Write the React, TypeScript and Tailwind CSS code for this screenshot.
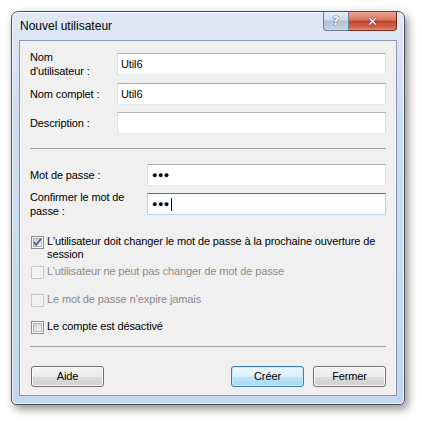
import React from "react";

// Boîte de dialogue Windows 7 : « Nouvel utilisateur »

const inputBox =
  "h-[22px] bg-white border border-t-[#abadb3] border-l-[#dbdfe6] border-r-[#dbdfe6] border-b-[#e3e9ef] flex items-center pl-[3px]";

function TextBox({ value, className = "" }: { value?: string; className?: string }) {
  return <div className={inputBox + " " + className}>{value}</div>;
}

function PasswordBox({ focused, className = "" }: { focused?: boolean; className?: string }) {
  const border = focused
    ? "border-t-[#3d7bad] border-l-[#b5cfe7] border-r-[#b5cfe7] border-b-[#b7d9ed] bg-[#fbfdff]"
    : "border-t-[#abadb3] border-l-[#dbdfe6] border-r-[#dbdfe6] border-b-[#e3e9ef] bg-white";
  return (
    <div className={`h-[22px] border flex items-center pl-[4px] ${border} ${className}`}>
      <span className="text-[9px] leading-none tracking-[0.5px] text-black">●●●</span>
      {focused && <span className="ml-[1px] h-[13px] w-px bg-black" />}
    </div>
  );
}

function Checkbox({ checked, disabled }: { checked?: boolean; disabled?: boolean }) {
  return (
    <span
      className={`mt-[1px] flex h-[13px] w-[13px] shrink-0 items-center justify-center border ${
        disabled ? "border-[#c7c7c7] bg-[#f4f4f4]" : "border-[#8e8f8f] bg-white"
      }`}
    >
      <span
        className={`flex h-[9px] w-[9px] items-center justify-center ${
          disabled
            ? "bg-[#f1f1f1]"
            : "bg-gradient-to-br from-[#cbcfd5] to-[#f6f6f6] border border-[#aeb3b9]"
        }`}
      >
        {checked && (
          <svg width="9" height="9" viewBox="0 0 9 9" className="overflow-visible">
            <path d="M0.8 4.2 L3.3 6.9 L8 0.8" fill="none" stroke="#4b5e93" strokeWidth="1.8" />
          </svg>
        )}
      </span>
    </span>
  );
}

function CheckRow({
  label,
  checked,
  disabled,
  className = "",
}: {
  label: React.ReactNode;
  checked?: boolean;
  disabled?: boolean;
  className?: string;
}) {
  return (
    <div className={`flex items-start gap-[3px] leading-[13px] ${className}`}>
      <Checkbox checked={checked} disabled={disabled} />
      <span className={disabled ? "text-[#8b8b8b]" : "text-black"}>{label}</span>
    </div>
  );
}

function Button({ children, isDefault }: { children: React.ReactNode; isDefault?: boolean }) {
  return (
    <div
      className={`flex h-[21px] w-[73px] items-center justify-center rounded-[3px] border ${
        isDefault
          ? "border-[#3c7fb1] bg-[linear-gradient(#eaf6fd_0%,#d9f0fc_50%,#bee6fd_50%,#a7d9f5_100%)] shadow-[inset_0_0_0_1px_#c8ecfd]"
          : "border-[#707070] bg-[linear-gradient(#f2f2f2_0%,#ebebeb_50%,#dddddd_50%,#cfcfcf_100%)] shadow-[inset_0_0_0_1px_#fcfcfc]"
      }`}
    >
      {children}
    </div>
  );
}

export default function App() {
  return (
    <div className="min-h-[422px] w-[422px] bg-white pl-[11px] pt-[11px] font-['Liberation_Sans',Arial,sans-serif] text-[11px] tracking-[-0.12px] text-black">
      <div className="flex h-[394px] w-[394px] flex-col rounded-t-[7px] rounded-b-[5px] border border-[#46525f] bg-[linear-gradient(#dfe9f5_0%,#cddcef_30%,#c4d7ee_100%)] shadow-[3px_4px_10px_rgba(0,0,0,0.45),inset_0_0_0_1px_rgba(255,255,255,0.7)]">
        {/* barre de titre */}
        <div className="flex h-[28px] items-start justify-between pl-[8px] pr-[7px]">
          <div className="pt-[6px] text-[12px] leading-[16px] tracking-normal text-black">
            Nouvel utilisateur
          </div>
          <div className="flex">
            <div className="flex h-[19px] w-[26px] items-center justify-center rounded-bl-[4px] border border-t-0 border-[#6f7e92] bg-[linear-gradient(#e4ecf5_0%,#cfdbe9_45%,#b2c3d8_50%,#c7d6e8_100%)]">
              <span className="font-['DejaVu_Sans',sans-serif] text-[12px] font-bold leading-none text-white [text-shadow:0_0_1px_#334,0_0_1px_#334]">
                ?
              </span>
            </div>
            <div className="flex h-[19px] w-[48px] items-center justify-center rounded-br-[4px] border border-t-0 border-l-0 border-[#7a2a1f] bg-[linear-gradient(#e9a796_0%,#d9765f_45%,#c4432b_50%,#d0644c_85%,#e3947c_100%)]">
              <span className="font-['DejaVu_Sans',sans-serif] text-[13px] font-bold leading-none text-white [text-shadow:0_0_1px_#5a1a10,0_0_1px_#5a1a10]">
                ✕
              </span>
            </div>
          </div>
        </div>

        {/* zone client */}
        <div className="mx-[7px] mb-[8px] flex flex-1 flex-col border border-[#8596ad] bg-[#f0f0f0] px-[10px] pt-[12px]">
          <div className="flex h-[22px] items-center">
            <div className="w-[87px] shrink-0 leading-[14px]">
              Nom
              <br />
              d&apos;utilisateur :
            </div>
            <TextBox value="Util6" className="flex-1" />
          </div>
          <div className="mt-[8px] flex h-[22px] items-center">
            <div className="w-[87px] shrink-0">Nom complet :</div>
            <TextBox value="Util6" className="flex-1" />
          </div>
          <div className="mt-[7px] flex h-[22px] items-center">
            <div className="w-[87px] shrink-0">Description :</div>
            <TextBox className="flex-1" />
          </div>

          <div className="mt-[14px] h-px bg-[#a0a0a0]" />

          <div className="mt-[15px] flex h-[22px] items-center">
            <div className="w-[117px] shrink-0">Mot de passe :</div>
            <PasswordBox className="flex-1" />
          </div>
          <div className="mt-[7px] flex h-[22px] items-center">
            <div className="w-[117px] shrink-0 leading-[14px]">
              Confirmer le mot de
              <br />
              passe :
            </div>
            <PasswordBox focused className="flex-1" />
          </div>

          <div className="mt-[20px] flex flex-col pl-[1px]">
            <CheckRow
              checked
              label={
                <>
                  L&apos;utilisateur doit changer le mot de passe à la prochaine ouverture de
                  <br />
                  session
                </>
              }
            />
            <CheckRow
              disabled
              className="mt-[4px]"
              label="L’utilisateur ne peut pas changer de mot de passe"
            />
            <CheckRow disabled className="mt-[14px]" label="Le mot de passe n’expire jamais" />
            <CheckRow className="mt-[13px]" label="Le compte est désactivé" />
          </div>

          <div className="mt-[12px] h-px bg-[#a0a0a0]" />

          <div className="mt-[19px] flex items-center pl-[1px]">
            <Button>Aide</Button>
            <div className="flex-1" />
            <Button isDefault>Créer</Button>
            <div className="w-[9px]" />
            <Button>Fermer</Button>
          </div>
        </div>
      </div>
    </div>
  );
}
